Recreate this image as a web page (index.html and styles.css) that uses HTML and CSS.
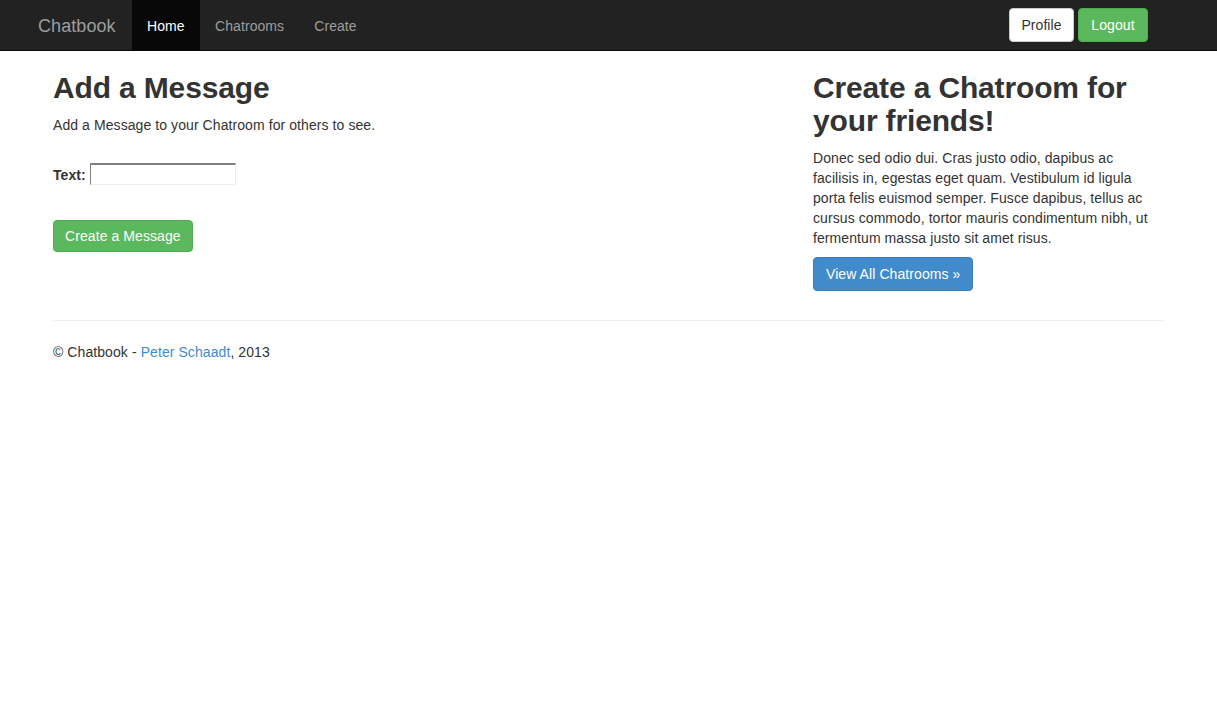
FILE: index.html
```html
<!DOCTYPE html>
<html>
<head>
<meta charset="utf-8">
<title>Chatbook</title>
<link rel="stylesheet" href="styles.css">
</head>
<body>
<nav class="navbar">
  <div class="nav-container">
    <a class="brand" href="#">Chatbook</a>
    <ul class="nav-links">
      <li><a class="active" href="#">Home</a></li>
      <li><a href="#">Chatrooms</a></li>
      <li><a href="#">Create</a></li>
    </ul>
    <div class="nav-right">
      <a class="btn btn-default" href="#">Profile</a>
      <a class="btn btn-success btn-logout" href="#">Logout</a>
    </div>
  </div>
</nav>
<div class="container">
  <div class="row">
    <div class="col-main">
      <h2 class="heading">Add a Message</h2>
      <p class="lead-text">Add a Message to your Chatroom for others to see.</p>
      <form class="msg-form">
        <div class="field">
          <label class="field-label" for="text">Text:</label>
          <input class="text-input" id="text" type="text">
        </div>
        <button class="btn btn-success btn-submit" type="button">Create a Message</button>
      </form>
    </div>
    <div class="col-side">
      <h2 class="heading">Create a Chatroom for your friends!</h2>
      <p class="body-text">Donec sed odio dui. Cras justo odio, dapibus ac facilisis in, egestas eget quam. Vestibulum id ligula porta felis euismod semper. Fusce dapibus, tellus ac cursus commodo, tortor mauris condimentum nibh, ut fermentum massa justo sit amet risus.</p>
      <a class="btn btn-primary" href="#">View All Chatrooms &raquo;</a>
    </div>
  </div>
  <hr class="divider">
  <footer class="footer">
    <p>&copy; Chatbook - <a href="#">Peter Schaadt</a>, 2013</p>
  </footer>
</div>
</body>
</html>
```

FILE: styles.css
```css
* { box-sizing: border-box; }
html, body { margin: 0; padding: 0; }
body {
  font-family: "Liberation Sans", Arial, Helvetica, sans-serif;
  font-size: 14px;
  line-height: 20px;
  color: #333;
  background: #fff;
  letter-spacing: 0.08px;
}
a { text-decoration: none; }

.navbar {
  background: #222;
  border-bottom: 1px solid #080808;
  height: 51px;
}
.nav-container {
  width: 1171px;
  margin: 0 auto;
  padding: 0 15px;
  display: flex;
  align-items: flex-start;
  height: 50px;
}
.brand {
  margin-left: -15px;
  padding: 16px 15px 14px;
  font-size: 18px;
  line-height: 20px;
  color: #9d9d9d;
  width: 109px;
}
.nav-links {
  list-style: none;
  margin: 0;
  padding: 0;
  display: flex;
}
.nav-links a {
  display: block;
  padding: 16px 15px 14px;
  line-height: 20px;
  color: #9d9d9d;
}
.nav-links a.active {
  background: #080808;
  color: #fff;
  width: 68px;
}
.nav-right {
  margin-left: auto;
  margin-right: 31px;
  margin-top: 8px;
  display: flex;
  gap: 4px;
}

.btn {
  display: inline-block;
  padding: 6px 12px;
  font-family: inherit;
  font-size: 14px;
  line-height: 20px;
  letter-spacing: 0.08px;
  white-space: nowrap;
  border: 1px solid transparent;
  border-radius: 4px;
  cursor: pointer;
}
.btn-default { background: #fff; color: #333; border-color: #ccc; width: 65px; text-align: center; padding: 6px 0; }
.btn-success { background: #5cb85c; color: #fff; border-color: #4cae4c; }
.btn-primary { background: #428bca; color: #fff; border-color: #357ebd; }
.btn-logout { width: 70px; text-align: center; padding: 6px 0; }

.container {
  width: 1141px;
  margin: 0 auto;
}
.row {
  display: flex;
}
.col-main {
  width: 760px;
  padding: 0 15px;
}
.col-side {
  width: 381px;
  padding: 0 15px;
}
.heading {
  font-size: 30px;
  line-height: 33px;
  font-weight: bold;
  letter-spacing: -0.15px;
  margin: 20px 0 11px;
  color: #333;
}
.lead-text {
  margin: 0 0 10px;
}
.body-text {
  margin: 0 0 9px;
  padding-right: 9px;
}
.msg-form { margin-top: 28px; }
.field {
  display: flex;
  align-items: center;
  gap: 4px;
}
.field-label { font-weight: bold; position: relative; top: 1px; }
.text-input {
  width: 146px;
  height: 22px;
  padding: 1px 2px;
  border-top: 2px solid #808080;
  border-left: 1px solid #808080;
  border-right: 1px solid #eeeeee;
  border-bottom: 1px solid #eeeeee;
  font-family: inherit;
  font-size: 13px;
  outline: none;
}
.btn-submit {
  margin-top: 35px;
  padding: 5px 11px;
}

.divider {
  margin: 29px 15px 21px;
  border: 0;
  border-top: 1px solid #eee;
}
.footer { padding: 0 15px; }
.footer p { margin: 0 0 10px; }
.footer a { color: #428bca; }
```
